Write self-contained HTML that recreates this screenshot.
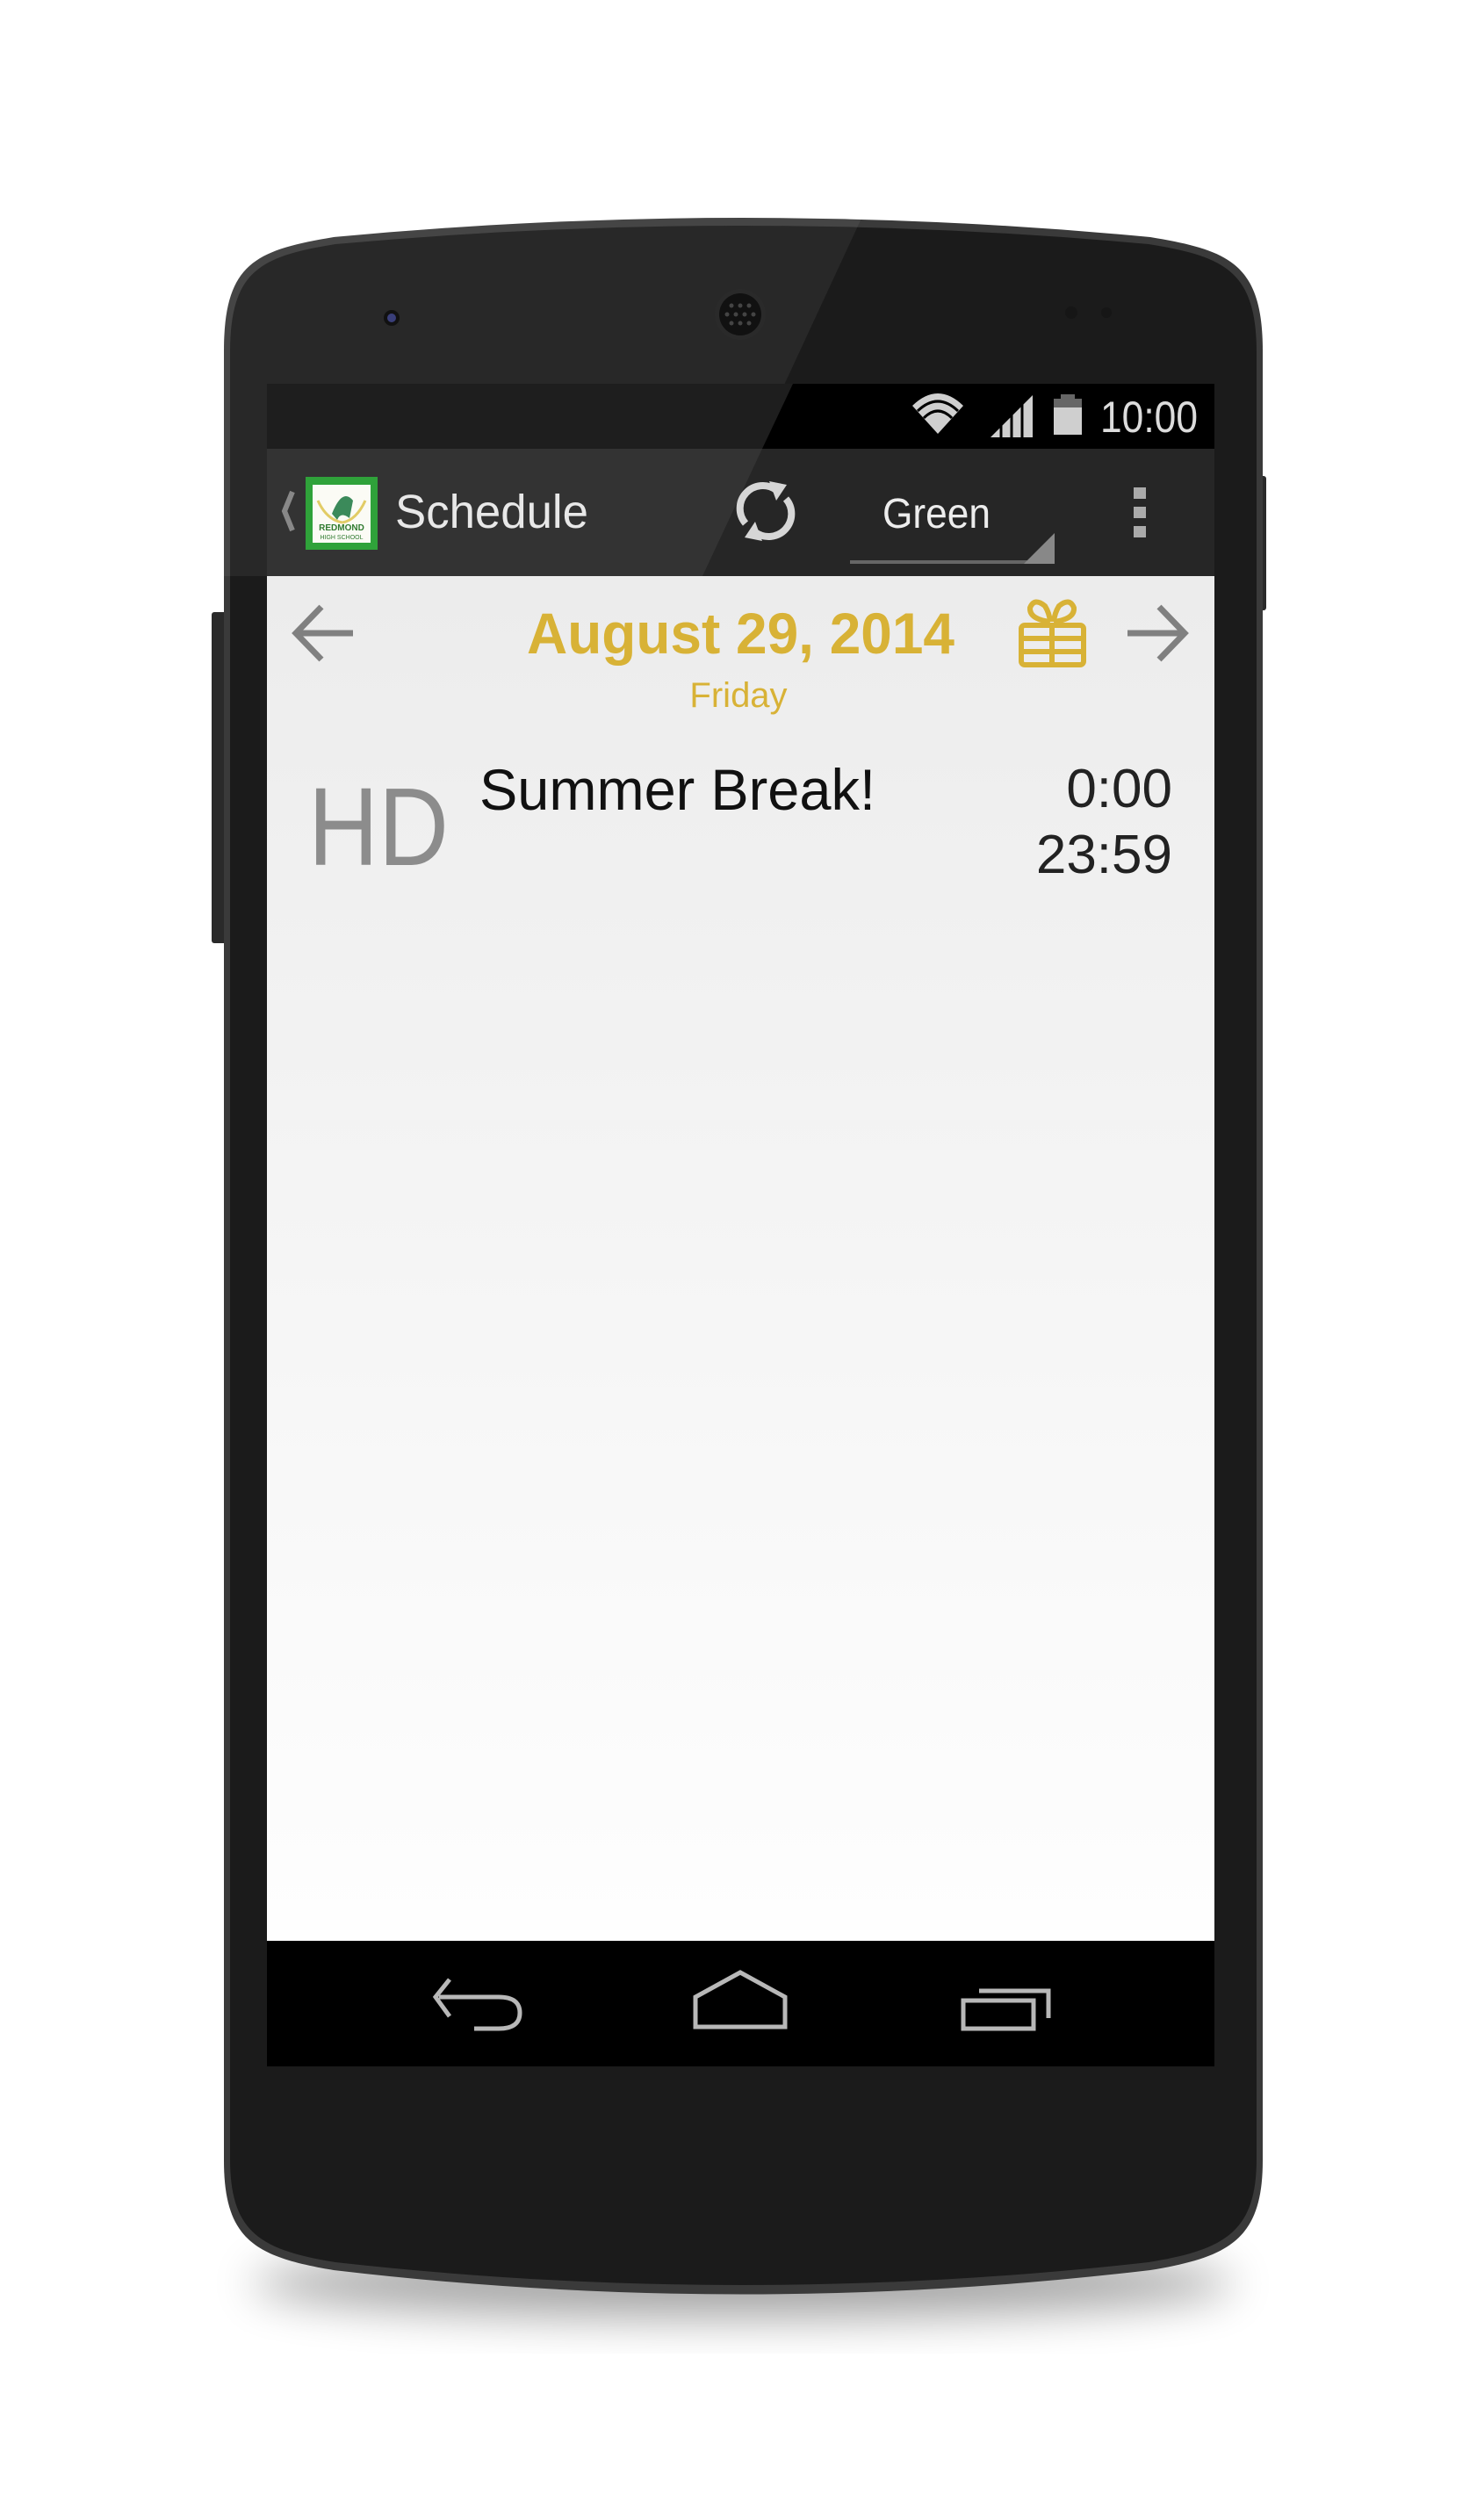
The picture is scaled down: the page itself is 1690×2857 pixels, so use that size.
<!DOCTYPE html>
<html><head><meta charset="utf-8"><style>
html,body{margin:0;padding:0;background:#fff;}
svg{display:block}
text{font-family:"Liberation Sans",sans-serif}
</style></head><body>
<svg width="1690" height="2857" viewBox="0 0 1690 2857" xmlns="http://www.w3.org/2000/svg">
<defs>
<filter id="blur" x="-20%" y="-50%" width="140%" height="200%"><feGaussianBlur stdDeviation="25"/></filter>
<linearGradient id="scr" x1="0" y1="0" x2="0" y2="1"><stop offset="0" stop-color="#ececec"/><stop offset="1" stop-color="#fefefe"/></linearGradient>
<clipPath id="ph"><path d="M255,400 C255,300 290,285 380,270 Q846,226 1310,270 C1400,285 1438,300 1438,400 L1438,2460 C1438,2550 1400,2570 1310,2585 Q846,2640 380,2585 C290,2570 255,2550 255,2460 Z"/></clipPath>
</defs>
<ellipse cx="846" cy="2600" rx="560" ry="40" fill="#000" opacity="0.35" filter="url(#blur)"/>
<rect x="1430" y="542" width="12" height="153" rx="3" fill="#2a2a2a"/>
<rect x="241" y="697" width="18" height="377" rx="3" fill="#2a2a2a"/>
<path d="M255,400 C255,300 290,285 380,270 Q846,226 1310,270 C1400,285 1438,300 1438,400 L1438,2460 C1438,2550 1400,2570 1310,2585 Q846,2640 380,2585 C290,2570 255,2550 255,2460 Z" fill="#3a3a3a"/>
<path d="M262,402 C262,308 296,292 382,278 Q846,236 1308,278 C1394,292 1431,308 1431,402 L1431,2458 C1431,2542 1394,2562 1308,2576 Q846,2628 382,2576 C296,2562 262,2542 262,2458 Z" fill="#1b1b1b"/>
<g clip-path="url(#ph)">
<polygon points="250,240 985,240 792,656 250,656" fill="#fff" opacity="0.06"/>
</g>
<circle cx="446" cy="362" r="9" fill="#111"/><circle cx="446" cy="362" r="5" fill="#3a3f7a"/>
<circle cx="843" cy="358" r="29" fill="#2a2a2a"/><circle cx="843" cy="358" r="24" fill="#111"/>
<g fill="#444">
<circle cx="833" cy="348" r="2.5"/><circle cx="843" cy="348" r="2.5"/><circle cx="853" cy="348" r="2.5"/>
<circle cx="828" cy="358" r="2.5"/><circle cx="838" cy="358" r="2.5"/><circle cx="848" cy="358" r="2.5"/><circle cx="858" cy="358" r="2.5"/>
<circle cx="833" cy="368" r="2.5"/><circle cx="843" cy="368" r="2.5"/><circle cx="853" cy="368" r="2.5"/>
</g>
<circle cx="1220" cy="356" r="7" fill="#161616"/><circle cx="1260" cy="356" r="6" fill="#161616"/>
<rect x="304" y="437" width="1079" height="74" fill="#000"/>
<polygon points="304,437 903,437 868,511 304,511" fill="#1e1e1e"/>
<path d="M1068,494 L1039,462 Q1068,434 1097,462 Z" fill="#cfcfcf"/>
<path d="M1045,468 Q1068,446 1091,468 M1052,476 Q1068,460 1084,476" stroke="#000" stroke-width="3" fill="none"/>
<polygon points="1128,498 1176,450 1176,498" fill="#cfcfcf"/>
<g stroke="#000" stroke-width="3"><line x1="1140" y1="450" x2="1140" y2="500"/><line x1="1152" y1="450" x2="1152" y2="500"/><line x1="1164" y1="450" x2="1164" y2="500"/></g>
<rect x="1208" y="449" width="16" height="6" fill="#666"/>
<rect x="1200" y="454" width="32" height="10" fill="#666"/>
<rect x="1200" y="464" width="32" height="31" fill="#cfcfcf"/>
<text x="1253" y="492" font-size="50" fill="#dcdcdc" textLength="111" lengthAdjust="spacingAndGlyphs">10:00</text>
<rect x="304" y="511" width="1079" height="145" fill="#262626"/>
<polygon points="304,511 868,511 800,656 304,656" fill="#333"/>
<path d="M333,560 L324,582 L333,604" stroke="#888" stroke-width="6" fill="none"/>
<rect x="348" y="543" width="82" height="83" fill="#2fa23a"/>
<rect x="356" y="552" width="66" height="66" fill="#fbfbf5"/>
<path d="M378,585 Q390,555 402,570 L398,590 Q388,582 384,592 Z" fill="#3b8a5a"/>
<path d="M362,570 Q372,592 390,595 M416,570 Q406,592 390,595" stroke="#e2cc66" stroke-width="3" fill="none"/>
<text x="389" y="604" text-anchor="middle" font-size="10" font-weight="bold" fill="#2f7a2f">REDMOND</text>
<text x="389" y="614" text-anchor="middle" font-size="7" fill="#2f7a2f">HIGH SCHOOL</text>
<text x="450" y="601" font-size="54" fill="#e8e8e8" textLength="220" lengthAdjust="spacingAndGlyphs">Schedule</text>
<g stroke="#d6d6d6" stroke-width="8" fill="none">
<path d="M849,596 A26,26 0 0 1 884,558"/>
<path d="M895,568 A26,26 0 0 1 860,606"/>
</g>
<polygon points="876,548 896,552 884,570" fill="#d6d6d6"/>
<polygon points="868,616 848,612 860,594" fill="#d6d6d6"/>
<text x="1005" y="601" font-size="48" fill="#ededed" textLength="123" lengthAdjust="spacingAndGlyphs">Green</text>
<rect x="968" y="638" width="233" height="4" fill="#666"/>
<polygon points="1201,607 1201,642 1166,642" fill="#888"/>
<rect x="1291" y="555" width="14" height="13" fill="#aaa"/><rect x="1291" y="577" width="14" height="13" fill="#aaa"/><rect x="1291" y="599" width="14" height="13" fill="#aaa"/>
<rect x="304" y="656" width="1079" height="1554" fill="url(#scr)"/>
<path d="M402,721 L338,721 M366,691 L337,721 L366,751" stroke="#808080" stroke-width="7" fill="none"/>
<text x="600" y="744" font-size="66" font-weight="bold" fill="#d8b236" textLength="487" lengthAdjust="spacingAndGlyphs">August 29, 2014</text>
<text x="841" y="805" text-anchor="middle" font-size="40" fill="#d8b236">Friday</text>
<g stroke="#d8b236" stroke-width="6" fill="none">
<rect x="1163" y="712" width="71" height="45" rx="4"/>
<line x1="1163" y1="727" x2="1234" y2="727"/><line x1="1163" y1="742" x2="1234" y2="742"/>
<line x1="1198" y1="710" x2="1198" y2="757"/>
<path d="M1196,708 Q1172,705 1173,692 Q1178,680 1190,690 Q1195,698 1196,708"/>
<path d="M1200,708 Q1224,705 1223,692 Q1218,680 1206,690 Q1201,698 1200,708"/>
</g>
<path d="M1284,721 L1348,721 M1320,691 L1349,721 L1320,751" stroke="#808080" stroke-width="7" fill="none"/>
<text x="351" y="985" font-size="126" fill="#8c8c8c" textLength="160" lengthAdjust="spacingAndGlyphs">HD</text>
<text x="546" y="922" font-size="66" fill="#111" textLength="451" lengthAdjust="spacingAndGlyphs">Summer Break!</text>
<text x="1335" y="919" text-anchor="end" font-size="62" fill="#222">0:00</text>
<text x="1335" y="994" text-anchor="end" font-size="62" fill="#222">23:59</text>
<rect x="304" y="2210" width="1079" height="143" fill="#000"/>
<g stroke="#b8b8b8" stroke-width="5" fill="none">
<path d="M500,2274 L568,2274 Q592,2274 592,2292 Q592,2310 568,2310 L540,2310"/>
<path d="M512,2254 L496,2274 L512,2296"/>
<path d="M792,2308 L792,2274 L843,2246 L894,2274 L894,2308 Z"/>
<rect x="1097" y="2278" width="80" height="32"/>
<path d="M1115,2267 L1194,2267 L1194,2298"/>
</g>
</svg>
</body></html>
